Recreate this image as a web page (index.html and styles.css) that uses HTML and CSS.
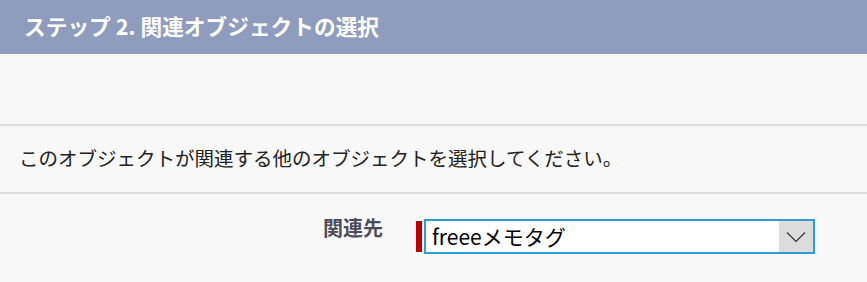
FILE: index.html
```html
<!DOCTYPE html>
<html lang="ja">
<head>
<meta charset="utf-8">
<link rel="stylesheet" href="styles.css">
</head>
<body>
<div class="page">
  <div class="header">ステップ 2. 関連オブジェクトの選択</div>
  <div class="spacer"></div>
  <div class="desc">このオブジェクトが関連する他のオブジェクトを選択してください。</div>
  <div class="field-row">
    <div class="label">関連先</div>
    <div class="req"></div>
    <div class="select">
      <span class="value">freeeメモタグ</span>
      <span class="arrow">
        <svg width="20" height="12" viewBox="0 0 20 12"><polyline points="1,1.5 10,10.5 19,1.5" fill="none" stroke="#333" stroke-width="1.2"/></svg>
      </span>
    </div>
  </div>
</div>
</body>
</html>
```
FILE: styles.css
```css
html, body {
  margin: 0;
  padding: 0;
  background: #f8f8f8;
}
.page {
  font-family: "Noto Sans CJK JP", "Noto Sans", sans-serif;
  width: 867px;
  height: 282px;
  overflow: hidden;
  background: #f8f8f8;
}
.header {
  height: 54px;
  line-height: 52px;
  background: #8e9dbd;
  color: #ffffff;
  font-weight: bold;
  font-size: 21.7px;
  padding-left: 24px;
  box-sizing: border-box;
  white-space: nowrap;
}
.spacer {
  height: 70px;
  border-bottom: 2px solid #dcdcdc;
}
.desc {
  height: 66px;
  line-height: 64px;
  font-size: 19.5px;
  color: #222;
  padding-left: 19px;
  border-bottom: 2px solid #dcdcdc;
  white-space: nowrap;
}
.field-row {
  display: flex;
  align-items: flex-start;
  padding-top: 25px;
}
.label {
  width: 383px;
  text-align: right;
  font-weight: bold;
  font-size: 20px;
  line-height: 26px;
  color: #4c4c58;
  margin-top: -4px;
}
.req {
  width: 6px;
  height: 31px;
  background: #c00000;
  margin-left: 33px;
  margin-top: 2px;
}
.select {
  margin-left: 2px;
  width: 391px;
  height: 35px;
  box-sizing: border-box;
  border: 2px solid #2a9ed8;
  background: #ffffff;
  display: flex;
  align-items: stretch;
}
.value {
  flex: 1;
  font-size: 21px;
  line-height: 30px;
  color: #000;
  padding-left: 6px;
  white-space: nowrap;
}
.arrow {
  width: 34px;
  background: #dcdcdc;
  display: flex;
  align-items: center;
  justify-content: center;
}
.arrow svg {
  display: block;
}
```
